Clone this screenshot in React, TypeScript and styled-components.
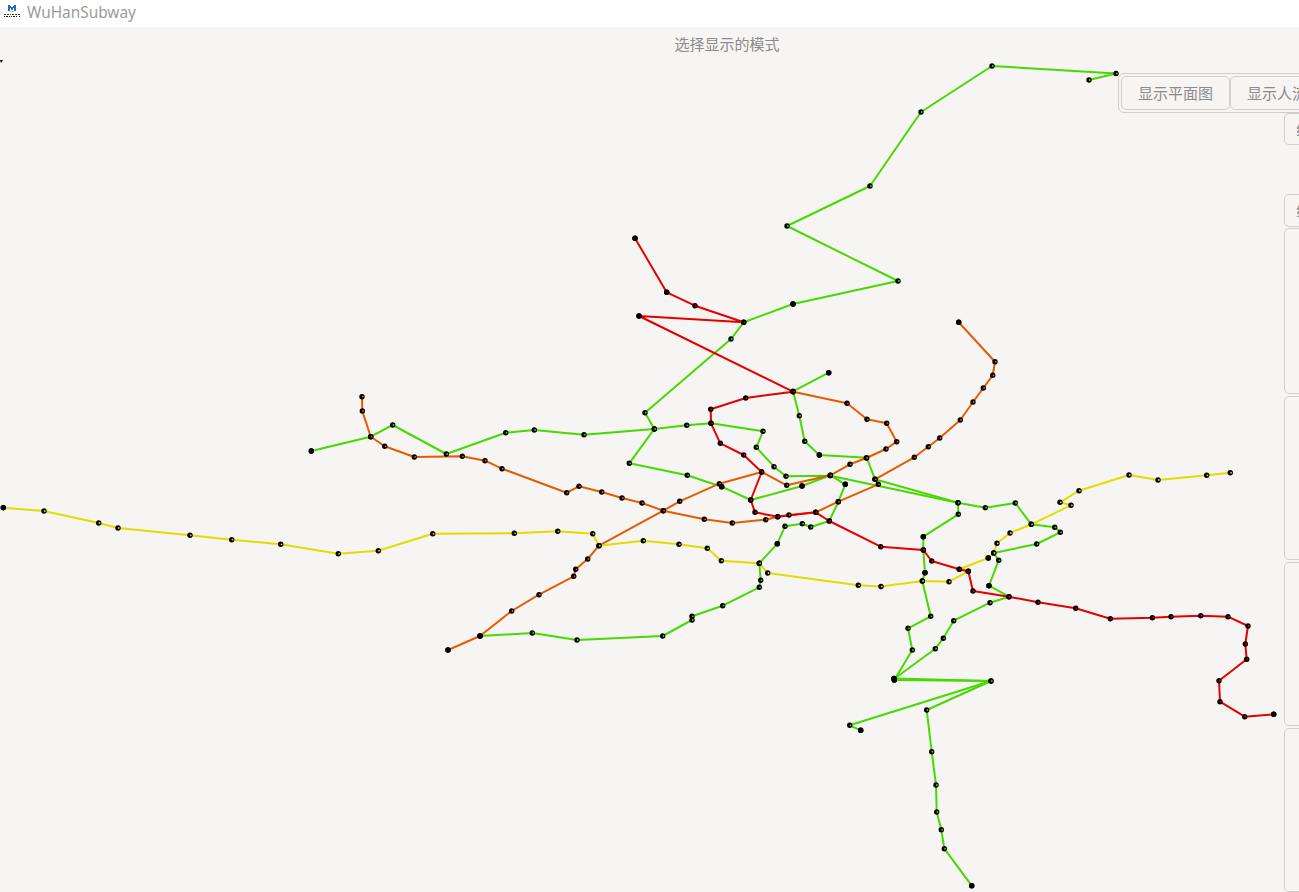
import React, { FC } from 'react';
import styled, { createGlobalStyle } from 'styled-components';

const GlobalStyle = createGlobalStyle`
  html, body {
    margin: 0;
    height: 100%;
    overflow: hidden;
    background: #f6f5f4;
  }
  #root {
    height: 100%;
  }
`

const fontStack = `"Noto Sans", "Noto Sans CJK SC", sans-serif`

const Window = styled.div`
  display: flex;
  flex-direction: column;
  width: 100%;
  height: 100%;
  font-family: ${fontStack};
  color: #8b8b8b;
`

const TitleBar = styled.div`
  display: flex;
  align-items: center;
  flex: 0 0 27px;
  gap: 7px;
  padding: 0 0 3px 4px;
  box-sizing: border-box;
  background: #fff;
`

const TitleText = styled.span`
  font-size: 15.4px;
  color: #9b9b9b;
`

const Stage = styled.div`
  position: relative;
  flex: 1;
  overflow: hidden;
`

const Heading = styled.div`
  position: relative;
  padding-top: 7px;
  padding-left: 155px;
  text-align: center;
  font-size: 15px;
  line-height: 20px;
`

const MapCanvas = styled.svg`
  position: absolute;
  top: -27px;
  left: 0;
  width: 1299px;
  height: 892px;
`

const SideColumn = styled.div`
  position: absolute;
  top: 86px;
  left: 1284px;
  display: flex;
  flex-direction: column;
  width: 160px;
`

const SidePanel = styled.div<{ $height: number; $gap?: number }>`
  box-sizing: border-box;
  height: ${({ $height }) => $height}px;
  margin-bottom: ${({ $gap }) => $gap ?? 2}px;
  padding-left: 11px;
  border: 1px solid #d2cfcb;
  border-radius: 5px;
  font-size: 15px;
  line-height: 30px;
  white-space: nowrap;
`

const ModeGroup = styled.div`
  position: absolute;
  top: 46px;
  left: 1118px;
  display: flex;
  width: 280px;
  padding: 2px 0 2px 2px;
  box-sizing: border-box;
  background: #f6f5f4;
  border: 1px solid #d2cfcb;
  border-radius: 6px;
`

const ModeButton = styled.div`
  display: flex;
  align-items: center;
  flex: 0 0 auto;
  height: 34px;
  box-sizing: border-box;
  padding: 0 16px 2px;
  border: 1px solid #d2cfcb;
  border-radius: 5px;
  font-size: 15px;
  white-space: nowrap;
`

const LINE_COLORS = {
  green: '#47d900',
  orange: '#e35d00',
  yellow: '#e3dc00',
  red: '#e40000',
}

type Line = { color: keyof typeof LINE_COLORS; points: string }

const LINES: Line[] = [
  { color: 'green', points: '1089,80 1116,73.5 992,66 921,112 870,186 787,226 898,281 793,304 743.7,322.3 731,339 645,412.7 654.3,429 629.3,463.3 687.3,475.3 721.7,486.7 750.7,500 802,486 830.3,475.3 845.3,484.3 838.3,501.7 829.3,521 810.7,527 802.3,523.7 785,526.3 777.3,543.7 759.3,563.3 760.7,580.3 759.3,587.3 722.7,605.7 692,616.3 692,620 662.7,636 577,640 532.3,633 480,636' },
  { color: 'green', points: '311.3,451 370.7,436.7 392.7,425 446.3,454 505.7,432.7 534.3,430 584,434.7 654.3,429 686.7,425.3 711,423.3 763,431.3 756.3,447.3 774,466.7 786,476.3 830.3,475.7 958,502.7 985.3,507.7 1015.3,503 1031.3,524.3 1054.7,527.3 1060.3,532.3 1036.7,544 993.7,553 998.7,560.3 989,585.7 1009,596.7 990,602.7 953.7,620.7 943.3,638.3 935.3,648.7 894,679' },
  { color: 'green', points: '828.7,372.7 793,391.3 799.3,415.7 804.7,441.3 819.3,455 866.7,457.7 875,479.3 958,502.7 958.3,514.3 923.3,536.7 923.3,550 925,572.7 922.3,581 930.7,616.3 908,628.3 912.3,650 894.3,680 991,681 926.7,710 931.7,751.7 936,785 936.7,812 941.3,829.7 944.3,848.7 971.7,885.7' },
  { color: 'green', points: '894,678.5 991,681 849.7,725.3 860.7,730.3' },
  { color: 'orange', points: '958.7,322.3 995,361.7 992.7,375.3 983.3,388 973,402 960.3,420 939.7,438 928.3,446.7 914.3,457.3 875,479.3 878.3,484.3 838.3,501.7 815.7,512.3 789,515 777.7,516.7 765.7,519.7 732.3,523 704.3,519.3 663.3,510.7 642,503 622,498 601.7,492 579,486.3 566.7,492.7 502,468.7 485,460.7 462.3,456.3 414.3,457 384.7,446.3 370.7,436.7 362.3,411 362,396.7' },
  { color: 'orange', points: '793,391.7 847,403.3 867,419.3 886.7,423.3 896.7,441.7 886,449 866.3,458 850,464.3 830.3,475.3 786.7,485.3 761.7,472 719.3,483.7 679.7,501.3 663.3,510.7 599,545.7 587.7,559 575.7,569.3 573.7,576.3 539,594.7 511.7,611 480,636 448,650' },
  { color: 'yellow', points: '3.3,507.7 44,511 98.7,523 118,528 190,535.3 231.7,539.7 280.7,544.3 338.3,553.7 378.3,550.7 432.7,533.7 514.3,533.3 557.7,531.3 592.7,533.7 599,545.7 643.3,540.7 679,544.3 707.3,548.3 721.3,560.7 759.3,563.3 767.7,573 858.3,585.3 881,586.5 922.3,581 949,581.7 968.3,571.3 959.3,569.3 988.3,558 993.7,553 997,543.3 1010,533 1031.3,524.3 1071,505.3 1060,502.3 1079,490.7 1129,475 1158,480 1206.7,475.3 1230.3,472.7' },
  { color: 'red', points: '635,238.3 666.7,292.3 695,305.7 743.7,322.3 639,316 793,391.7 745.7,398 710.7,409.3 711,423.3 720.3,443.3 743.7,455 761.7,472 750.7,500 755,512.3 777.7,516.7 815.7,512.3 829.3,521 880.7,546.7 923.3,550 931.7,561 959.3,569.3 968.3,571.3 973,591 1009,596.7 1038,602.3 1075.7,608.3 1110.3,618.7 1152.3,617.7 1171,616.7 1200.7,615.7 1228,616.7 1248,626 1245.3,644 1246.7,659.3 1219,680.7 1220,701.7 1244.7,716.7 1273.7,714.3' },
]

const parsePoints = (points: string) => points.split(' ').map((p) => p.split(',').map(Number))

// these stations have no line colour showing through them
const TOP_STOPS = [
  [828.7, 372.7], [3.3, 507.7], [311.3, 451], [958.7, 322.3], [1273.7, 714.3], [971.7, 885.7],
  [860.7, 730.3], [802, 486], [721.7, 486.7], [793, 304], [819.3, 455], [845.3, 484.3],
  [777.3, 543.7], [480, 636], [894, 678.5], [894.3, 680], [988.3, 558], [989, 585.7], [923.3, 536.7],
  [925, 572.7], [635, 238.3], [666.7, 292.3], [639, 316], [448, 650],
]

const AppIcon: FC = () => (
  <svg width="16" height="16" viewBox="0 0 16 16" shapeRendering="crispEdges">
    <path d="M4 1h2v1h1v1h2V2h1V1h2v6h-2V4H9v2H7V4H6v3H4z" fill="#1b6cc0" />
    <rect x="6" y="7" width="4" height="1" fill="#e9b93a" />
    <path d="M0 10h2v1H0zM3 10h2v1H3zM6 10h1v1H6zM8 10h2v1H8zM11 10h2v1h-2zM14 10h2v1h-2z" fill="#444" />
    <path d="M0 12h1v1H0zM2 12h2v1H2zM5 12h1v1H5zM7 12h1v1H7zM9 12h2v1H9zM12 12h1v1h-1zM15 12h1v1h-1z" fill="#111" />
  </svg>
)

const SubwayMap: FC = () => (
  <MapCanvas viewBox="0 0 1299 892">
    {LINES.map((line, i) => (
      <polyline key={i} points={line.points} fill="none" stroke={LINE_COLORS[line.color]} strokeWidth={2} strokeLinejoin="round" />
    ))}
    {LINES.flatMap((line, i) =>
      parsePoints(line.points).map(([x, y], j) => (
        <g key={`${i}-${j}`}>
          <circle cx={x} cy={y} r={2.7} fill="#000" />
          <circle cx={x + 0.8} cy={y} r={0.9} fill={LINE_COLORS[line.color]} />
        </g>
      ))
    )}
    {TOP_STOPS.map(([x, y], i) => (
      <circle key={i} cx={x} cy={y} r={2.7} fill="#000" />
    ))}
    <path d="M0 60h3L1 63z" fill="#000" />
  </MapCanvas>
)

const App: FC = () => {
  return (
    <Window>
      <GlobalStyle />
      <TitleBar>
        <AppIcon />
        <TitleText>WuHanSubway</TitleText>
      </TitleBar>
      <Stage>
        <SubwayMap />
        <Heading>选择显示的模式</Heading>
        <SideColumn>
          <SidePanel $height={32} $gap={49}>线路选择</SidePanel>
          <SidePanel $height={33} $gap={1}>线路选择</SidePanel>
          <SidePanel $height={166} />
          <SidePanel $height={164} />
          <SidePanel $height={164} />
          <SidePanel $height={164} />
        </SideColumn>
        <ModeGroup>
          <ModeButton>显示平面图</ModeButton>
          <ModeButton>显示人流量图</ModeButton>
        </ModeGroup>
      </Stage>
    </Window>
  );
};

export default App;
